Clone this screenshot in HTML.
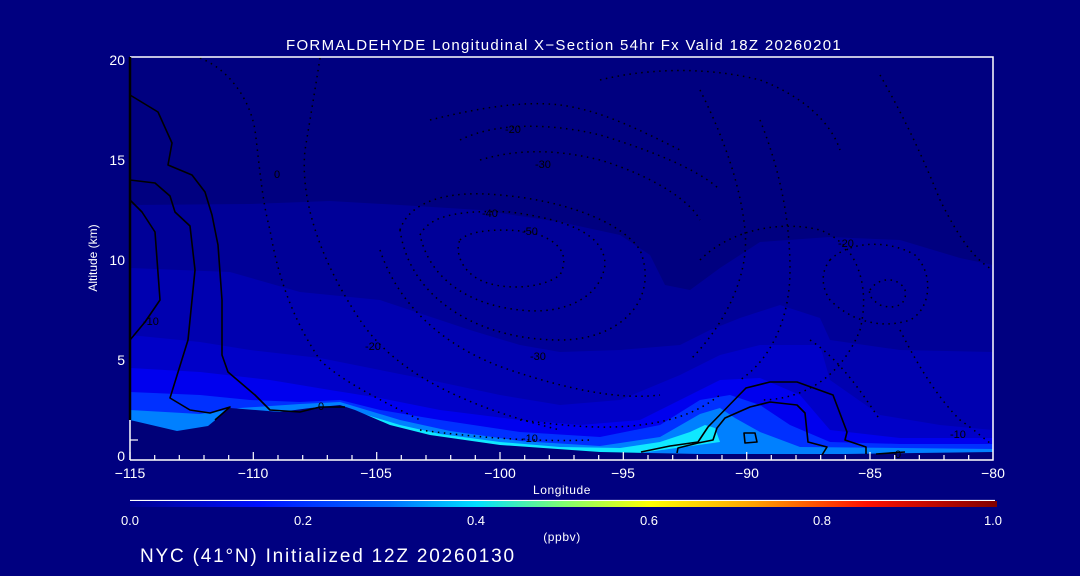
<!DOCTYPE html>
<html><head><meta charset="utf-8"><style>
html,body{margin:0;padding:0;background:#000080;}
svg{display:block}
text{font-family:"Liberation Sans",sans-serif;fill:#fff}
</style></head><body>
<svg width="1080" height="576" viewBox="0 0 1080 576" xmlns="http://www.w3.org/2000/svg">
<defs>
<linearGradient id="cb" x1="0" x2="1" y1="0" y2="0">
<stop offset="0" stop-color="#000090"/>
<stop offset="0.15" stop-color="#0010ff"/>
<stop offset="0.3" stop-color="#0070ff"/>
<stop offset="0.4" stop-color="#00e0ff"/>
<stop offset="0.5" stop-color="#80ff70"/>
<stop offset="0.6" stop-color="#ffff00"/>
<stop offset="0.72" stop-color="#ffa000"/>
<stop offset="0.85" stop-color="#ff1000"/>
<stop offset="1" stop-color="#800000"/>
</linearGradient>
</defs>
<rect width="1080" height="576" fill="#000080"/>
<polygon fill="#000098" points="130,205 250,204 330,201 400,205 480,210 560,222 620,235 650,255 665,285 690,290 720,268 760,242 830,237 900,240 960,258 993,265 993,460 130,460"/>
<polygon fill="#0000b0" points="130,268 230,272 300,292 380,300 470,330 520,345 560,352 620,350 680,345 710,330 740,318 780,305 820,318 830,340 900,350 993,352 993,460 130,460"/>
<polygon fill="#0000c8" points="130,335 200,342 250,350 320,358 380,370 430,380 500,395 560,405 620,400 680,375 720,355 760,345 820,345 830,380 880,415 940,425 993,430 993,460 130,460"/>
<polygon fill="#0000ee" points="130,368 200,372 270,380 330,390 380,398 440,410 520,420 580,425 640,420 690,395 720,380 760,378 800,395 830,430 900,438 993,438 993,460 130,460"/>
<polygon fill="#0030ff" points="130,392 200,395 250,400 300,402 340,400 380,410 440,420 520,432 600,437 660,425 700,400 730,395 760,405 790,425 830,442 900,444 993,444 993,460 130,460"/>
<polygon fill="#0080ff" points="130,410 200,414 240,408 300,404 340,402 360,408 400,420 450,431 520,441 600,446 660,437 700,414 720,408 735,418 760,432 800,447 993,449 993,460 130,460"/>
<polygon fill="#10e8ff" points="345,408 370,416 400,425 440,434 500,442 560,447 620,448 660,442 690,432 705,425 715,428 720,442 640,453 500,452 400,442"/>
<polygon fill="#000078" points="130,420 177,431 208,426 230,408 280,412 310,408 340,405 355,410 390,425 430,435 500,445 600,452 700,454 845,454 993,452 993,462 130,462"/>
<g fill="none" stroke="#000" stroke-width="1.5" stroke-dasharray="1.5 4.5">
<path d="M200,58 C230,70 250,100 255,130 C260,170 262,200 270,230 C280,290 300,330 320,360 C340,380 380,400 420,420"/>
<path d="M320,58 C315,90 310,120 305,150 C300,200 320,260 360,320 C400,380 480,410 560,430"/>
<path d="M430,120 C470,110 520,100 560,105 C600,110 640,130 680,150"/>
<path d="M460,140 C500,120 560,125 600,135 C650,150 700,170 720,190"/>
<path d="M480,160 C520,148 560,150 600,160 C650,175 690,200 700,220"/>
<path d="M400,230 C410,200 450,190 500,195 C560,200 620,220 640,250 C660,300 620,340 560,340 C480,340 410,300 400,230Z"/>
<path d="M420,235 C430,215 460,210 510,212 C570,220 605,235 605,265 C600,300 560,315 520,310 C470,305 430,280 420,235Z"/>
<path d="M460,240 C470,230 500,228 530,232 C560,240 570,255 560,275 C540,290 500,290 480,280 C460,270 455,250 460,240Z"/>
<path d="M380,250 C400,310 450,350 510,370 C570,390 620,400 660,395"/>
<path d="M600,80 C640,70 700,65 760,80 C800,95 830,120 840,150"/>
<path d="M700,90 C720,130 740,180 745,230 C750,280 720,330 690,360"/>
<path d="M760,120 C780,170 790,220 790,270 C790,320 770,360 740,380"/>
<path d="M880,75 C900,110 920,150 940,200 C960,240 975,260 993,270"/>
<path d="M700,260 C730,230 780,220 820,230 C860,245 870,290 860,330 C840,380 800,400 760,400"/>
<path d="M830,260 C850,240 890,240 915,255 C935,275 930,310 910,320 C880,330 850,320 830,300 C820,285 822,270 830,260Z"/>
<path d="M870,290 C880,275 900,278 905,290 C908,305 895,310 880,305 C872,300 868,295 870,290Z"/>
<path d="M900,330 C920,370 940,400 960,420 C975,430 985,440 993,445"/>
<path d="M520,420 C560,425 600,430 640,425 C680,420 700,410 720,395"/>
<path d="M420,430 C480,438 540,442 590,440"/>
<path d="M810,340 C840,360 860,390 880,420"/>
</g>
<g fill="none" stroke="#000" stroke-width="1.6" stroke-linejoin="round">
<path d="M130,95 L158,112 L172,143 L168,165 L192,175 L205,192 L212,215 L218,245 L222,300 L222,355 L228,372 L255,395 L270,410 L300,412 L320,407 L345,407"/>
<path d="M130,180 L155,183 L170,196 L175,212 L190,226 L195,270 L192,300 L188,340 L170,398 L190,410 L210,413 L230,407 L215,420"/>
<path d="M130,200 L142,212 L155,232 L160,300 L145,322 L130,340"/>
<path d="M641,452 L670,446 L698,442 L708,427 L746,388 L770,382 L797,382 L833,395 L847,432 L845,440 L866,447 L866,454"/>
<path d="M677,453 L678,448 L698,443 L713,440 L717,428 L725,418 L750,407 L770,402 L797,405 L805,413 L808,442 L827,447 L822,455"/>
<path d="M744,433 L755,433 L757,442 L745,443 Z"/>
<path d="M876,454 L905,452"/>
</g>
<g font-size="11">
<text x="274" y="178" style="fill:#000">0</text>
<text x="505" y="133" style="fill:#000">-20</text>
<text x="535" y="168" style="fill:#000">-30</text>
<text x="482" y="217" style="fill:#000">-40</text>
<text x="522" y="235" style="fill:#000">-50</text>
<text x="838" y="247" style="fill:#000">-20</text>
<text x="530" y="360" style="fill:#000">-30</text>
<text x="365" y="350" style="fill:#000">-20</text>
<text x="318" y="410" style="fill:#000">0</text>
<text x="522" y="442" style="fill:#000">-10</text>
<text x="950" y="438" style="fill:#000">-10</text>
<text x="143" y="325" style="fill:#000">-10</text>
<text x="895" y="458" style="fill:#000">0</text>
</g>
<g stroke="#fff" stroke-width="1.5" fill="none">
<path d="M130,57 L993,57 L993,460 L130,460"/>
</g>
<path d="M130,57 L130,420" stroke="#000" stroke-width="2.5"/>
<path d="M130,420 L130,460" stroke="#fff" stroke-width="1.5"/>
<g stroke="#fff" stroke-width="1.2">
<path d="M130,460v-8M154.7,460v-5M179.3,460v-5M204,460v-5M228.7,460v-5M253.3,460v-8M278,460v-5M302.7,460v-5M327.3,460v-5M352,460v-5M376.7,460v-8M401.3,460v-5M426,460v-5M450.7,460v-5M475.3,460v-5M500,460v-8M524.7,460v-5M549.3,460v-5M574,460v-5M598.7,460v-5M623.3,460v-8M648,460v-5M672.7,460v-5M697.3,460v-5M722,460v-5M746.7,460v-8M771.3,460v-5M796,460v-5M820.7,460v-5M845.3,460v-5M870,460v-8M894.7,460v-5M919.3,460v-5M944,460v-5M968.7,460v-5"/>
<path d="M130,440h8"/>
</g>
<g font-size="14" text-anchor="middle">
<text x="130" y="478">−115</text><text x="253" y="478">−110</text><text x="376" y="478">−105</text><text x="500" y="478">−100</text><text x="623" y="478">−95</text><text x="747" y="478">−90</text><text x="870" y="478">−85</text><text x="993" y="478">−80</text>
</g>
<g font-size="14" text-anchor="end">
<text x="125" y="65">20</text><text x="125" y="165">15</text><text x="125" y="265">10</text><text x="125" y="365">5</text><text x="125" y="461">0</text>
</g>
<text x="562" y="494" font-size="12" text-anchor="middle" letter-spacing="0.6">Longitude</text>
<text transform="translate(97,258) rotate(-90)" font-size="12" text-anchor="middle">Altitude (km)</text>
<text x="564" y="50" font-size="15" text-anchor="middle" letter-spacing="1.3">FORMALDEHYDE Longitudinal X−Section 54hr  Fx Valid 18Z 20260201</text>
<path d="M130,500.5 L995,500.5" stroke="#fff" stroke-width="1.2"/>
<rect x="130" y="501" width="867" height="6" fill="url(#cb)"/>
<g font-size="13" text-anchor="middle">
<text x="130" y="525">0.0</text><text x="303" y="525">0.2</text><text x="476" y="525">0.4</text><text x="649" y="525">0.6</text><text x="822" y="525">0.8</text><text x="993" y="525">1.0</text>
</g>
<text x="562" y="541" font-size="12" text-anchor="middle" letter-spacing="0.6">(ppbv)</text>
<text x="140" y="562" font-size="19" letter-spacing="1.8">NYC (41°N) Initialized 12Z 20260130</text>
</svg>
</body></html>
